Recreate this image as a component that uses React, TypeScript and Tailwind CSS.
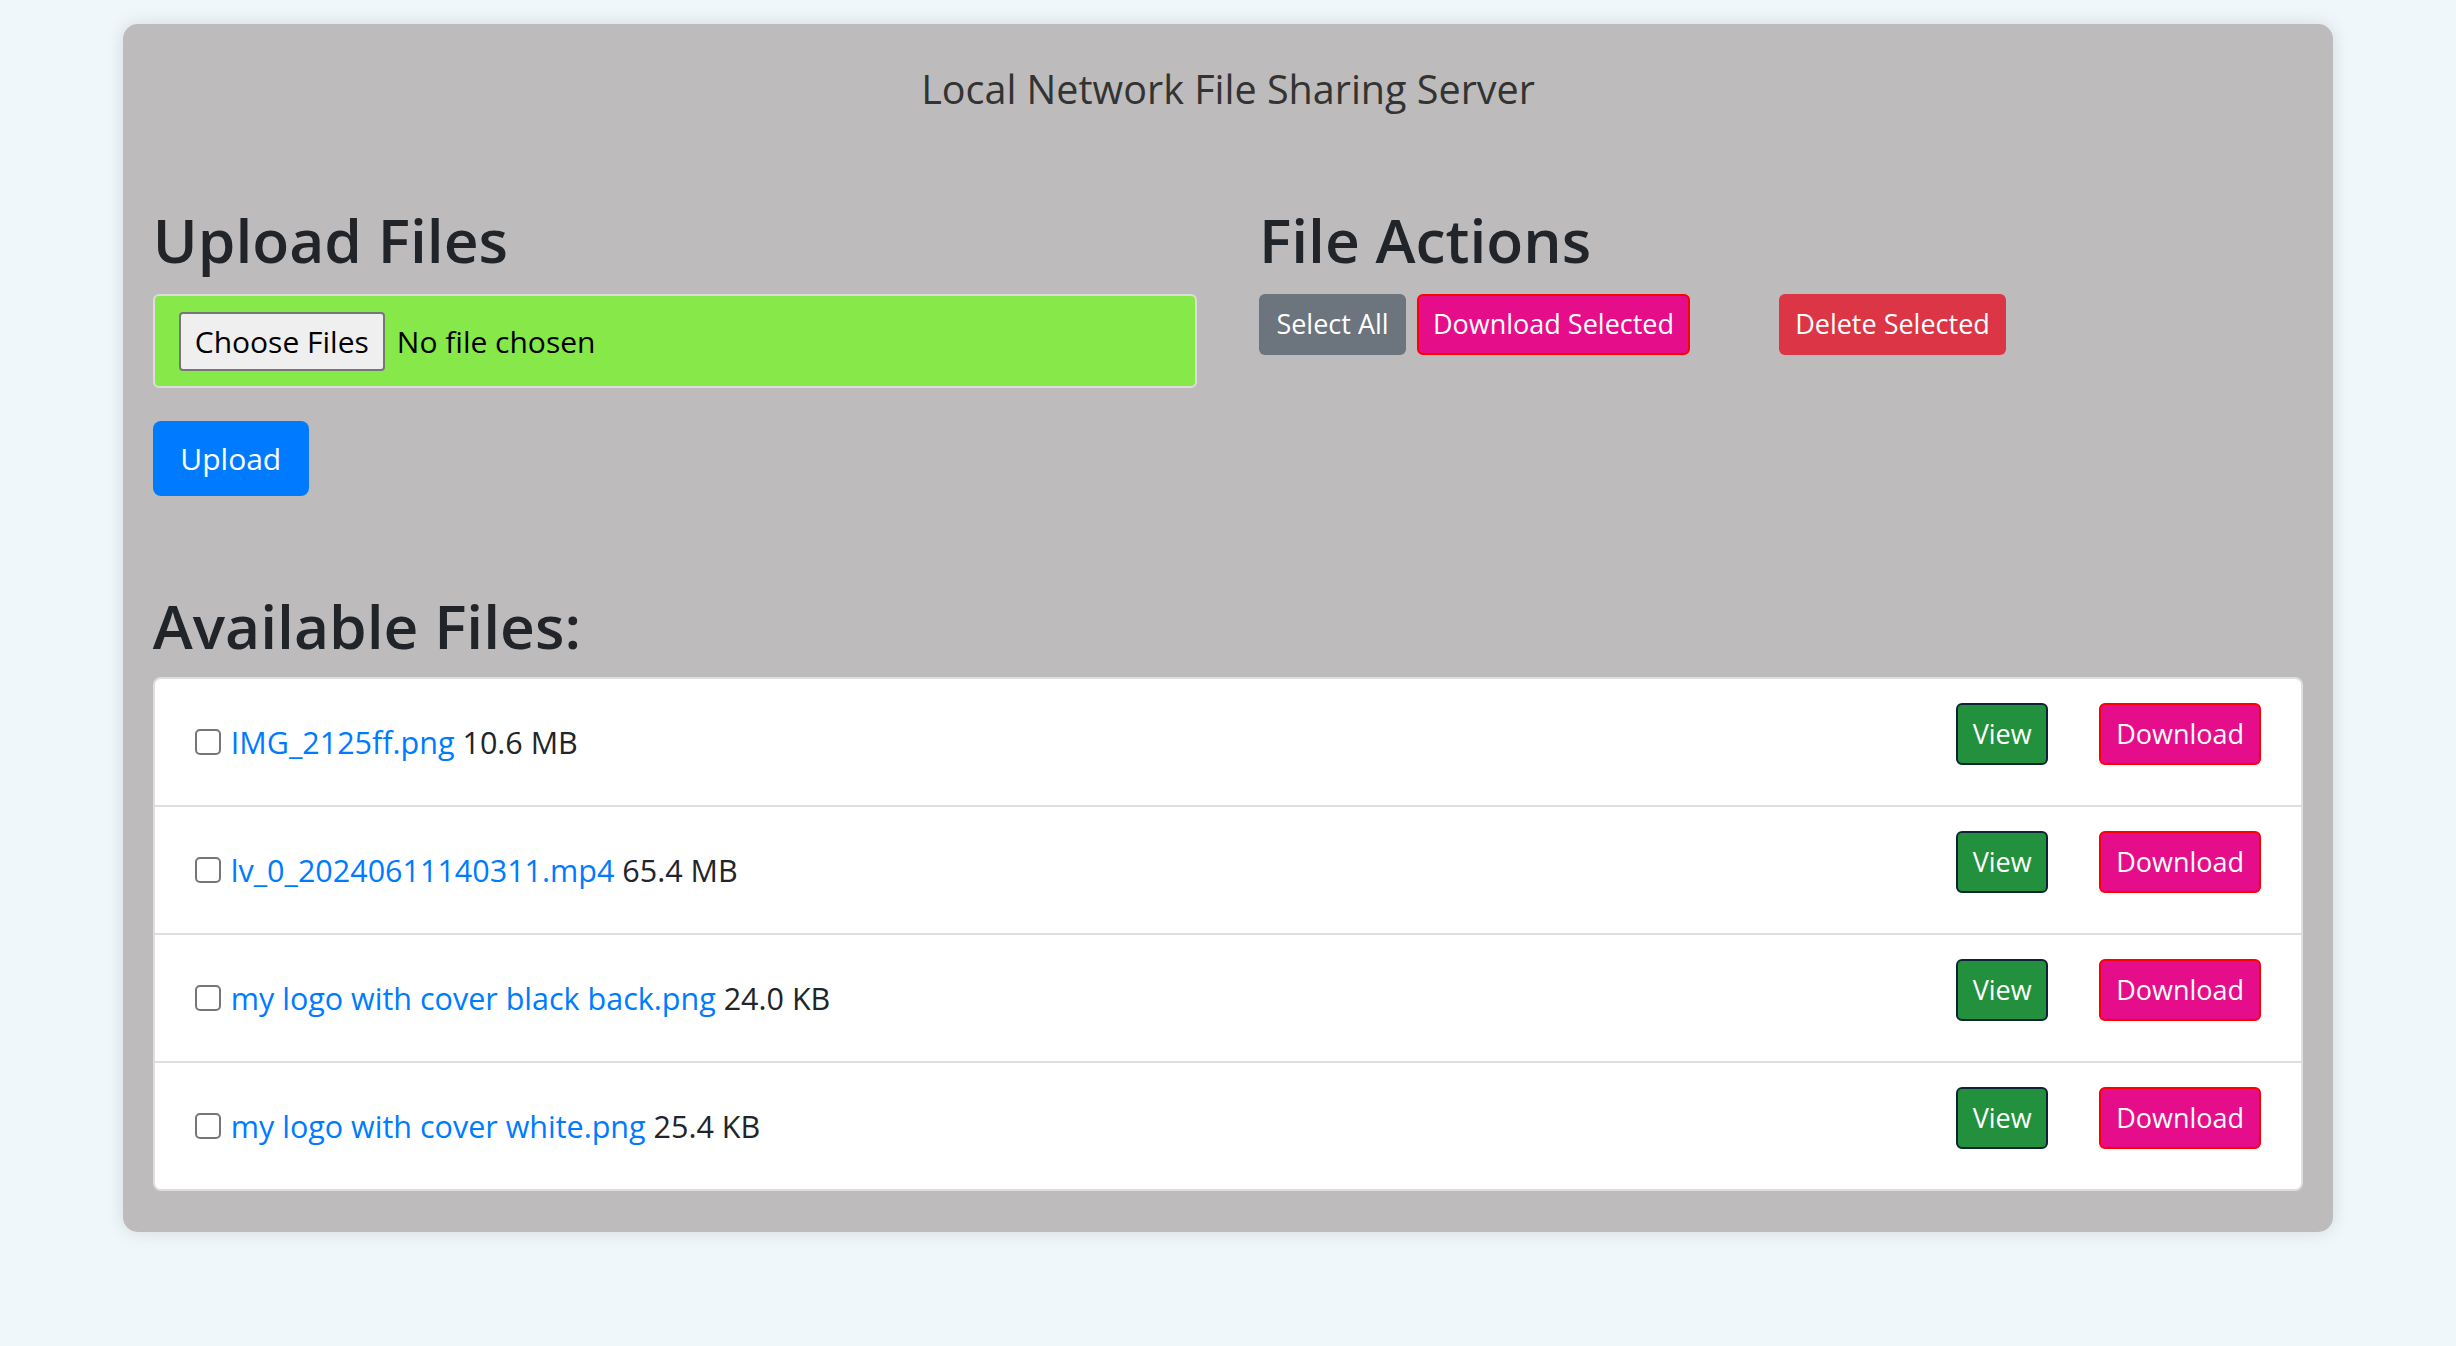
const files = [
  {name: 'IMG_2125ff.png', size: '10.6 MB'},
  {name: 'lv_0_20240611140311.mp4', size: '65.4 MB'},
  {name: 'my logo with cover black back.png', size: '24.0 KB'},
  {name: 'my logo with cover white.png', size: '25.4 KB'},
];

export default function App() {
  return (
    <div className="min-h-screen bg-[#eff7fa] pt-[24px] font-['Open_Sans','Noto_Sans',sans-serif] text-[#212529]">
      <div className="mx-auto w-[90%] rounded-[15px] bg-[#bdbbbc] px-[30px] pt-[41px] pb-[41px] shadow-[0_0_18px_rgba(0,0,0,0.12)]">
        <h4 className="mb-[89px] text-center text-[39.5px] leading-[48px] text-[#333]">
          Local Network File Sharing Server
        </h4>

        <div className="grid grid-cols-2 gap-x-[62px]">
          <div>
            <h2 className="mb-[16px] text-[60.5px] leading-[76px] font-semibold">Upload Files</h2>
            <div className="flex h-[94px] items-center rounded-[6px] border-2 border-[#dcdcdc] bg-[#87e84a] pl-[24px]">
              <span className="flex h-[59px] w-[206px] items-center justify-center rounded-[4px] border-2 border-[#767676] bg-[#efefef] text-[30px] text-black">
                Choose Files
              </span>
              <span className="ml-[12px] text-[30px] text-black">No file chosen</span>
            </div>
            <button className="mt-[33px] flex h-[75px] w-[156px] items-center justify-center rounded-[8px] bg-[#007bff] text-[30px] text-white">
              Upload
            </button>
          </div>

          <div>
            <h2 className="mb-[16px] text-[60.5px] leading-[76px] font-semibold">File Actions</h2>
            <div className="flex items-center">
              <button className="flex h-[61px] w-[147px] items-center justify-center rounded-[6px] bg-[#6c757d] text-[27px] text-white">
                Select All
              </button>
              <button className="ml-[11px] flex h-[61px] w-[273px] items-center justify-center rounded-[6px] border-2 border-[#ff0000] bg-[#e60d8a] text-[27px] text-white">
                Download Selected
              </button>
              <button className="ml-[89px] flex h-[61px] w-[227px] items-center justify-center rounded-[6px] bg-[#dc3545] text-[27px] text-white">
                Delete Selected
              </button>
            </div>
          </div>
        </div>

        <h2 className="mt-[92px] mb-[13px] text-[60.5px] leading-[76px] font-semibold">Available Files:</h2>

        <ul className="divide-y-2 divide-[#dfdfdf] rounded-[8px] border-2 border-[#dfdfdf] bg-white">
          {files.map((f) => (
            <li key={f.name} className="flex items-center justify-between px-[40px] py-[24px]">
              <div className="flex items-center">
                <input
                  type="checkbox"
                  className="h-[26px] w-[26px] appearance-none rounded-[5px] border-2 border-[#767676] bg-white"
                />
                <span className="ml-[10px] text-[30.5px] leading-[46px]">
                  <a href="#" className="text-[#007bff]">{f.name}</a> {f.size}
                </span>
              </div>
              <div className="flex h-[78px] items-start gap-[51px]">
                <button className="flex h-[62px] w-[92px] items-center justify-center rounded-[6px] border-2 border-[#0c2433] bg-[#22903d] text-[27px] text-white">
                  View
                </button>
                <button className="flex h-[62px] w-[162px] items-center justify-center rounded-[6px] border-2 border-[#ff0000] bg-[#e60d8a] text-[27px] text-white">
                  Download
                </button>
              </div>
            </li>
          ))}
        </ul>
      </div>
    </div>
  );
}
